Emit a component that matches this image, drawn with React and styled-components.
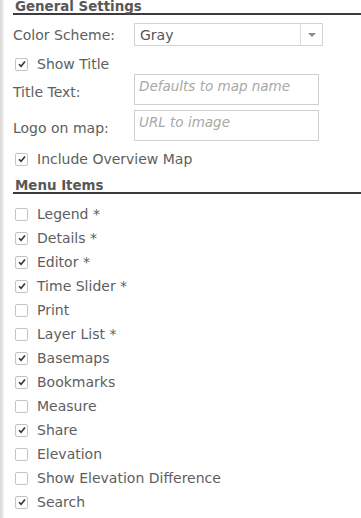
import React from "react";
import styled, { createGlobalStyle } from "styled-components";

const Global = createGlobalStyle`
  html, body { margin: 0; padding: 0; background: #fff; }
  body { font-family: "DejaVu Sans", Verdana, sans-serif; }
`;

const Page = styled.div`
  width: 361px;
  height: 518px;
  overflow: hidden;
  display: flex;
  background: #fff;
`;

const Edge = styled.div`
  width: 4px;
  flex: none;
  background: linear-gradient(to right, #d6d6d6, #e8e8e8 60%, #f4f4f4);
`;

const Panel = styled.div`
  flex: 1;
  padding-left: 9px;
  display: flex;
  flex-direction: column;
  color: #5e5e5e;
  font-size: 14px;
`;

const Heading = styled.div`
  font-weight: bold;
  font-size: 13.4px;
  color: #575757;
  padding-left: 2px;
  height: ${(p) => p.$h}px;
  display: flex;
  align-items: flex-end;
  line-height: 13px;
  margin-top: ${(p) => p.$mt || 0}px;
  border-bottom: 2px solid #3c3c3c;
  box-sizing: border-box;
  white-space: nowrap;
`;

const Row = styled.div`
  display: flex;
  align-items: center;
  height: ${(p) => p.$h}px;
  margin-top: ${(p) => p.$mt || 0}px;
`;

const Label = styled.div`
  width: 121px;
  flex: none;
  white-space: nowrap;
  padding-top: ${(p) => p.$pt || 0}px;
`;

const Select = styled.div`
  width: 189px;
  height: 23px;
  box-sizing: border-box;
  border: 1px solid #d4d4d4;
  display: flex;
  align-items: center;
`;

const SelectValue = styled.div`
  flex: 1;
  padding-left: 5px;
  color: #555;
`;

const SelectArrow = styled.div`
  width: 21px;
  height: 100%;
  border-left: 1px solid #dcdcdc;
  display: flex;
  align-items: center;
  justify-content: center;
  &::after {
    content: "";
    border-left: 4px solid transparent;
    border-right: 4px solid transparent;
    border-top: 4px solid #8a8a8a;
  }
`;

const TextBox = styled.div`
  width: 185px;
  height: 31px;
  box-sizing: border-box;
  border: 1px solid #cfcfcf;
  padding: 3px 0 0 4px;
  font-style: italic;
  font-size: 13.5px;
  color: #a8a8a8;
  white-space: nowrap;
`;

const BoxWrap = styled.span`
  width: 13px;
  height: 13px;
  box-sizing: border-box;
  border: 1px solid #c4c4c4;
  border-radius: 2px;
  background: #fff;
  margin-left: 2px;
  margin-right: 9px;
  flex: none;
  display: flex;
  align-items: center;
  justify-content: center;
`;

const CheckText = styled.span`
  white-space: nowrap;
`;

function Check({ checked }) {
  return (
    <BoxWrap>
      {checked && (
        <svg width="8" height="8" viewBox="0 0 8 8">
          <path d="M1 4.2 L3.1 6.3 L7 1.6" fill="none" stroke="#333" strokeWidth="1.6" />
        </svg>
      )}
    </BoxWrap>
  );
}

const items = [
  ["Legend *", false],
  ["Details *", true],
  ["Editor *", true],
  ["Time Slider *", true],
  ["Print", false],
  ["Layer List *", false],
  ["Basemaps", true],
  ["Bookmarks", true],
  ["Measure", false],
  ["Share", true],
  ["Elevation", false],
  ["Show Elevation Difference", false],
  ["Search", true],
];

export default function App() {
  return (
    <Page>
      <Global />
      <Edge />
      <Panel>
        <Heading $h={15}>General Settings</Heading>
        <Row $h={23} $mt={8}>
          <Label>Color Scheme:</Label>
          <Select>
            <SelectValue>Gray</SelectValue>
            <SelectArrow />
          </Select>
        </Row>
        <Row $h={20} $mt={8}>
          <Check checked />
          <CheckText>Show Title</CheckText>
        </Row>
        <Row $h={31}>
          <Label $pt={5}>Title Text:</Label>
          <TextBox>Defaults to map name</TextBox>
        </Row>
        <Row $h={31} $mt={5}>
          <Label $pt={4}>Logo on map:</Label>
          <TextBox>URL to image</TextBox>
        </Row>
        <Row $h={24} $mt={6}>
          <Check checked />
          <CheckText>Include Overview Map</CheckText>
        </Row>
        <Heading $h={23}>Menu Items</Heading>
        {items.map(([t, c], i) => (
          <Row key={t} $h={24} $mt={i === 0 ? 8 : 0}>
            <Check checked={c} />
            <CheckText>{t}</CheckText>
          </Row>
        ))}
      </Panel>
    </Page>
  );
}
